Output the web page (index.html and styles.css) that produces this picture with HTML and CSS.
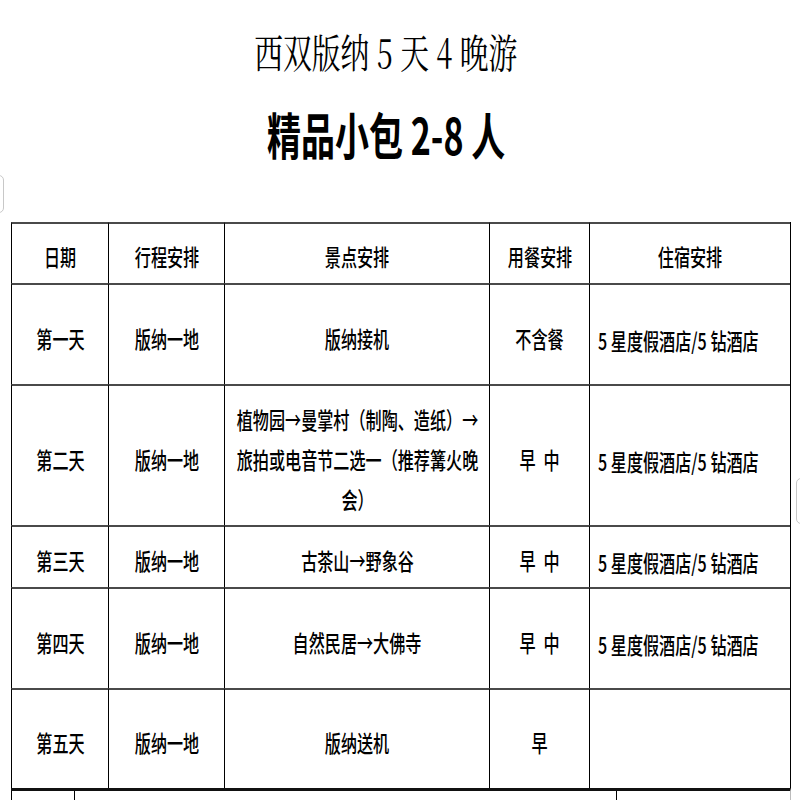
FILE: index.html
```html
<!DOCTYPE html>
<html lang="zh-CN">
<head>
<meta charset="utf-8">
<title>西双版纳5天4晚游</title>
<link rel="stylesheet" href="styles.css">
</head>
<body>
<div class="page">
  <header class="titles">
    <h1 class="t1"><span class="sx">西双版纳 5 天 4 晚游</span></h1>
    <h2 class="t2"><span class="sx">精品小包 2-8 人</span></h2>
  </header>

  <div class="grid">
    <div class="cell head"><span class="tx">日期</span></div>
    <div class="cell head"><span class="tx">行程安排</span></div>
    <div class="cell head"><span class="tx">景点安排</span></div>
    <div class="cell head"><span class="tx">用餐安排</span></div>
    <div class="cell head"><span class="tx">住宿安排</span></div>

    <div class="cell"><span class="tx">第一天</span></div>
    <div class="cell"><span class="tx">版纳一地</span></div>
    <div class="cell"><span class="tx">版纳接机</span></div>
    <div class="cell"><span class="tx">不含餐</span></div>
    <div class="cell hotel"><span class="tx">5 星度假酒店/5 钻酒店</span></div>

    <div class="cell"><span class="tx">第二天</span></div>
    <div class="cell"><span class="tx">版纳一地</span></div>
    <div class="cell multi"><span class="tx">植物园→曼掌村（制陶、造纸）→<br>旅拍或电音节二选一（推荐篝火晚<br>会）</span></div>
    <div class="cell"><span class="tx meal">早 中</span></div>
    <div class="cell hotel"><span class="tx">5 星度假酒店/5 钻酒店</span></div>

    <div class="cell"><span class="tx">第三天</span></div>
    <div class="cell"><span class="tx">版纳一地</span></div>
    <div class="cell"><span class="tx">古茶山→野象谷</span></div>
    <div class="cell"><span class="tx meal">早 中</span></div>
    <div class="cell hotel"><span class="tx">5 星度假酒店/5 钻酒店</span></div>

    <div class="cell"><span class="tx">第四天</span></div>
    <div class="cell"><span class="tx">版纳一地</span></div>
    <div class="cell"><span class="tx">自然民居→大佛寺</span></div>
    <div class="cell"><span class="tx meal">早 中</span></div>
    <div class="cell hotel"><span class="tx">5 星度假酒店/5 钻酒店</span></div>

    <div class="cell"><span class="tx">第五天</span></div>
    <div class="cell"><span class="tx">版纳一地</span></div>
    <div class="cell"><span class="tx">版纳送机</span></div>
    <div class="cell"><span class="tx">早</span></div>
    <div class="cell hotel"></div>
  </div>

  <div class="grid2">
    <div class="cell2"></div>
    <div class="cell2"></div>
    <div class="cell2 last"></div>
  </div>

  <div class="edge edge-left"></div>
  <div class="edge edge-right"></div>
</div>
</body>
</html>
```

FILE: styles.css
```css
html, body {
  margin: 0;
  padding: 0;
  background: #fff;
}

body {
  font-family: "Noto Sans CJK SC", "Noto Sans", sans-serif;
  color: #000;
  overflow: hidden;
}

.page {
  position: relative;
  width: 800px;
  height: 800px;
  overflow: hidden;
}

.titles {
  height: 222px;
  box-sizing: border-box;
  padding-top: 26px;
  padding-right: 28px;
  display: flex;
  flex-direction: column;
  align-items: center;
}

.t1, .t2 {
  margin: 0;
  display: flex;
  justify-content: center;
  white-space: nowrap;
}

.t1 {
  font-family: "Noto Serif CJK SC", "Noto Sans CJK SC", serif;
  font-size: 40px;
  font-weight: 400;
  line-height: 50px;
  height: 50px;
}

.t2 {
  margin-top: 27px;
  font-size: 50px;
  font-weight: 700;
  line-height: 60px;
  height: 60px;
}

.t2 .sx {
  transform: scaleX(0.68);
}

.sx {
  display: inline-block;
  transform: scaleX(0.72);
}

.grid {
  margin-left: 11px;
  width: 779px;
  display: grid;
  grid-template-columns: 97px 116px 265px 100px 201px;
  grid-template-rows: 61px 101px 141px 62px 101px 100px;
  border-right: 1px solid #000;
}

.cell {
  box-sizing: border-box;
  border-left: 1px solid #000;
  border-top: 2px solid #4a4a4a;
  display: flex;
  align-items: center;
  justify-content: center;
  padding-top: 6px;
  white-space: nowrap;
}

.cell.head {
  padding-top: 4px;
}

.tx {
  display: inline-block;
  flex: none;
  font-size: 23px;
  font-weight: 500;
  line-height: 30px;
  transform: scaleX(0.7);
  text-align: center;
}

.meal {
  word-spacing: 6px;
}

.multi .tx {
  line-height: 40px;
}

.hotel {
  justify-content: flex-start;
  padding-left: 8px;
  padding-top: 10px;
}

.hotel .tx {
  transform-origin: left center;
  text-align: left;
}

.grid2 {
  margin-left: 11px;
  width: 779px;
  display: grid;
  grid-template-columns: 63px 542px 174px;
  border-top: 3px solid #111;
  border-right: 1px solid #bbb;
  height: 20px;
}

.cell2 {
  border-left: 1px solid #000;
}

.edge {
  position: absolute;
  border: 1px solid #c8c8c8;
  border-radius: 5px;
  background: #fff;
}

.edge-left {
  left: -12px;
  top: 175px;
  width: 14px;
  height: 36px;
}

.edge-right {
  left: 796px;
  top: 478px;
  width: 14px;
  height: 44px;
}
```
